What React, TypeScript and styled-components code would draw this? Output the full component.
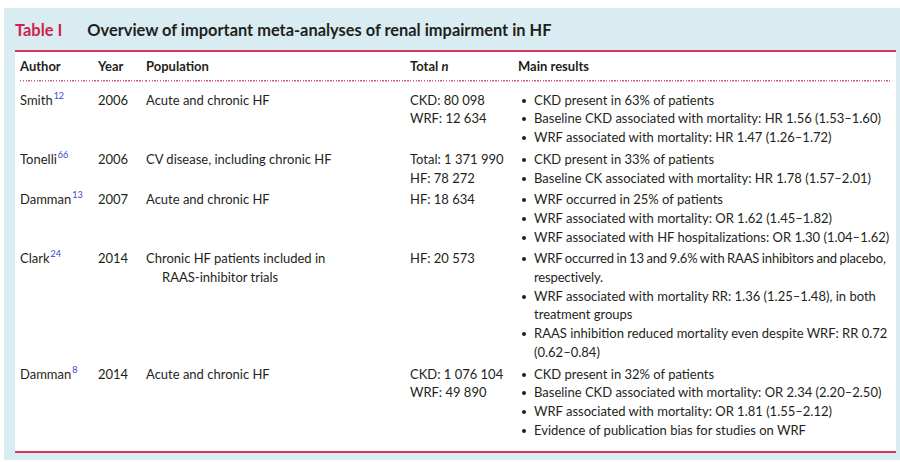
import React from 'react';
import styled, { createGlobalStyle } from 'styled-components';

const GlobalStyle = createGlobalStyle`
    html, body {
        margin: 0;
        padding: 0;
        background: #ffffff;
    }
    body {
        font-family: Lato, 'Open Sans', sans-serif;
        color: #231f20;
    }
`;

const Page = styled.div`
    width: 900px;
    height: 462px;
    padding: 8px 0 0 4px;
    box-sizing: border-box;
`;

const Panel = styled.div`
    background: #d9ecf1;
    height: 452px;
    padding: 0 4px 0 11px;
    box-sizing: border-box;
`;

const Title = styled.h1`
    margin: 0;
    height: 42px;
    display: flex;
    align-items: center;
    gap: 25px;
    font-size: 16.4px;
    font-weight: 700;
    color: #231f20;
    padding-top: 1px;
    box-sizing: border-box;
`;

const TableLabel = styled.span`
    color: #cf1f4f;
`;

const Table = styled.div`
    background: #ffffff;
    border-top: 2px solid #d1365e;
    border-bottom: 2px solid #d1365e;
    padding: 0 6px 10px 5px;
`;

const Grid = styled.div`
    display: grid;
    grid-template-columns: 78px 48px 264px 108px 1fr;
    font-size: 13px;
    line-height: 18.7px;
`;

const HeadCell = styled.div`
    font-weight: 700;
    padding: 5px 0 6px;
    background-image: repeating-linear-gradient(
        to right,
        #d6567a 0 1.4px,
        transparent 1.4px 2.75px
    );
    background-size: 100% 1.5px;
    background-repeat: no-repeat;
    background-position: bottom left;
`;

const Cell = styled.div<{ $first?: boolean }>`
    padding: ${(p) => (p.$first ? '9px' : '1.5px')} 0 1.5px;
`;

const Sup = styled.sup`
    color: #3b44d8;
    font-size: 9px;
    line-height: 0;
    vertical-align: 0;
    position: relative;
    top: -6px;
    margin-left: 1px;
`;

const Population = styled.div`
    padding-left: 16px;
    text-indent: -16px;
    white-space: pre-line;
`;

const List = styled.ul`
    margin: 0;
    padding: 0;
    list-style: none;
`;

const Item = styled.li<{ $tight?: boolean }>`
    position: relative;
    padding-left: 16px;
    white-space: pre-line;
    letter-spacing: ${(p) => (p.$tight ? '-0.15px' : 'normal')};
    word-spacing: ${(p) => (p.$tight ? '-0.6px' : 'normal')};
    &::before {
        content: '';
        position: absolute;
        left: 4px;
        top: 8px;
        width: 4px;
        height: 4px;
        border-radius: 50%;
        background: #231f20;
    }
`;

type Result = { text: string; tight?: boolean };

type Row = {
    author: string;
    ref: string;
    year: string;
    population: string;
    totals: string[];
    results: Result[];
};

const rows: Row[] = [
    {
        author: 'Smith',
        ref: '12',
        year: '2006',
        population: 'Acute and chronic HF',
        totals: ['CKD: 80 098', 'WRF: 12 634'],
        results: [
            { text: 'CKD present in 63% of patients' },
            { text: 'Baseline CKD associated with mortality: HR 1.56 (1.53\u20131.60)' },
            { text: 'WRF associated with mortality: HR 1.47 (1.26\u20131.72)' },
        ],
    },
    {
        author: 'Tonelli',
        ref: '66',
        year: '2006',
        population: 'CV disease, including chronic HF',
        totals: ['Total: 1 371 990', 'HF: 78 272'],
        results: [
            { text: 'CKD present in 33% of patients' },
            { text: 'Baseline CK associated with mortality: HR 1.78 (1.57\u20132.01)' },
        ],
    },
    {
        author: 'Damman',
        ref: '13',
        year: '2007',
        population: 'Acute and chronic HF',
        totals: ['HF: 18 634'],
        results: [
            { text: 'WRF occurred in 25% of patients' },
            { text: 'WRF associated with mortality: OR 1.62 (1.45\u20131.82)' },
            { text: 'WRF associated with HF hospitalizations: OR 1.30 (1.04\u20131.62)' },
        ],
    },
    {
        author: 'Clark',
        ref: '24',
        year: '2014',
        population: 'Chronic HF patients included in\nRAAS-inhibitor trials',
        totals: ['HF: 20 573'],
        results: [
            {
                text: 'WRF occurred in 13 and 9.6% with RAAS inhibitors and placebo,\nrespectively.',
                tight: true,
            },
            { text: 'WRF associated with mortality RR: 1.36 (1.25\u20131.48), in both\ntreatment groups' },
            { text: 'RAAS inhibition reduced mortality even despite WRF: RR 0.72\n(0.62\u20130.84)' },
        ],
    },
    {
        author: 'Damman',
        ref: '8',
        year: '2014',
        population: 'Acute and chronic HF',
        totals: ['CKD: 1 076 104', 'WRF: 49 890'],
        results: [
            { text: 'CKD present in 32% of patients' },
            { text: 'Baseline CKD associated with mortality: OR 2.34 (2.20\u20132.50)' },
            { text: 'WRF associated with mortality: OR 1.81 (1.55\u20132.12)' },
            { text: 'Evidence of publication bias for studies on WRF' },
        ],
    },
];

export default function App() {
    return (
        <>
            <GlobalStyle />
            <Page>
                <Panel>
                    <Title>
                        <TableLabel>Table I</TableLabel>
                        <span>Overview of important meta-analyses of renal impairment in HF</span>
                    </Title>
                    <Table>
                        <Grid>
                            <HeadCell>Author</HeadCell>
                            <HeadCell>Year</HeadCell>
                            <HeadCell>Population</HeadCell>
                            <HeadCell>
                                Total <i>n</i>
                            </HeadCell>
                            <HeadCell>Main results</HeadCell>
                            {rows.map((r, i) => (
                                <React.Fragment key={i}>
                                    <Cell $first={i === 0}>
                                        {r.author}
                                        <Sup>{r.ref}</Sup>
                                    </Cell>
                                    <Cell $first={i === 0}>{r.year}</Cell>
                                    <Cell $first={i === 0}>
                                        <Population>{r.population}</Population>
                                    </Cell>
                                    <Cell $first={i === 0}>
                                        {r.totals.map((t) => (
                                            <div key={t}>{t}</div>
                                        ))}
                                    </Cell>
                                    <Cell $first={i === 0}>
                                        <List>
                                            {r.results.map((res) => (
                                                <Item key={res.text} $tight={res.tight}>
                                                    {res.text}
                                                </Item>
                                            ))}
                                        </List>
                                    </Cell>
                                </React.Fragment>
                            ))}
                        </Grid>
                    </Table>
                </Panel>
            </Page>
        </>
    );
}
